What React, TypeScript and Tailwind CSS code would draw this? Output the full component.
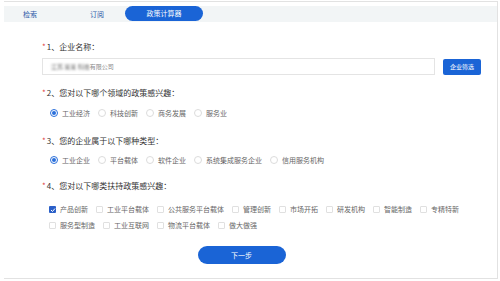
import React from "react";

const Radio = ({ label, checked }: { label: string; checked?: boolean }) => (
  <div className="flex items-center">
    {checked ? (
      <span className="w-[8px] h-[8px] rounded-full border border-[#2a6fdb] flex items-center justify-center">
        <span className="w-[4px] h-[4px] rounded-full bg-[#2a6fdb]" />
      </span>
    ) : (
      <span className="w-[8px] h-[8px] rounded-full border border-[#dcdcdc]" />
    )}
    <span className="ml-[4px] text-[7px] leading-none text-[#666]">{label}</span>
  </div>
);

const Check = ({ label, checked }: { label: string; checked?: boolean }) => (
  <div className="flex items-center">
    {checked ? (
      <span className="w-[7px] h-[7px] rounded-[1px] bg-[#2a5fc8] flex items-center justify-center">
        <svg width="6" height="6" viewBox="0 0 6 6">
          <path d="M1 3 L2.5 4.5 L5 1.5" stroke="white" strokeWidth="1" fill="none" />
        </svg>
      </span>
    ) : (
      <span className="w-[7px] h-[7px] rounded-[1px] border border-[#e0e0e0]" />
    )}
    <span className="ml-[4px] text-[7px] leading-none text-[#666]">{label}</span>
  </div>
);

const Label = ({ text }: { text: string }) => (
  <div className="flex items-center text-[8px] leading-none text-[#333]">
    <span className="text-[#e04040] mr-[1px]">*</span>
    {text}
  </div>
);

export default function App() {
  return (
    <div
      className="w-[500px] h-[281px] bg-white overflow-hidden"
      style={{ fontFamily: '"Noto Sans CJK SC", "Noto Sans", sans-serif' }}
    >
      <div className="ml-[4px] mt-[1px] w-[494px] h-[278px] border border-[#e2e2e2] border-l-0 bg-white">
        <div className="pt-[4px]">
          <div className="h-[16px] bg-[#f2f5f6] flex items-center relative">
            <span className="absolute left-[19px] text-[7px] leading-none text-[#2e5aa8]">检索</span>
            <span className="absolute left-[86px] text-[7px] leading-none text-[#2e5aa8]">订阅</span>
            <div className="absolute left-[121px] top-[0px] w-[78px] h-[15px] rounded-full bg-[#1a64d6] flex items-center justify-center text-[7px] leading-none text-white">
              政策计算器
            </div>
          </div>
        </div>

        <div className="pl-[38px] pr-[16px]">
          <div className="mt-[21px]">
            <Label text="1、企业名称：" />
          </div>
          <div className="mt-[7px] flex items-center">
            <div className="w-[393px] h-[17px] border border-[#e4e4e4] flex items-center pl-[8px] text-[6px] leading-none text-[#888]">
              <span className="blur-[0.8px] text-[#666]">江苏 某某 科技</span>
              <span>有限公司</span>
            </div>
            <div className="ml-[8px] w-[38px] h-[16px] rounded-[2px] bg-[#1a64d6] flex items-center justify-center text-[6px] leading-none text-white">
              企业筛选
            </div>
          </div>

          <div className="mt-[14px]">
            <Label text="2、您对以下哪个领域的政策感兴趣：" />
          </div>
          <div className="mt-[12px] ml-[8px] flex items-center gap-x-[8px]">
            <Radio label="工业经济" checked />
            <Radio label="科技创新" />
            <Radio label="商务发展" />
            <Radio label="服务业" />
          </div>

          <div className="mt-[20px]">
            <Label text="3、您的企业属于以下哪种类型：" />
          </div>
          <div className="mt-[11px] ml-[8px] flex items-center gap-x-[8px]">
            <Radio label="工业企业" checked />
            <Radio label="平台载体" />
            <Radio label="软件企业" />
            <Radio label="系统集成服务企业" />
            <Radio label="信用服务机构" />
          </div>

          <div className="mt-[18px]">
            <Label text="4、您对以下哪类扶持政策感兴趣：" />
          </div>
          <div className="mt-[16px] ml-[7px] flex flex-wrap items-center gap-x-[8px] gap-y-[9px] w-[420px]">
            <Check label="产品创新" checked />
            <Check label="工业平台载体" />
            <Check label="公共服务平台载体" />
            <Check label="管理创新" />
            <Check label="市场开拓" />
            <Check label="研发机构" />
            <Check label="智能制造" />
            <Check label="专精特新" />
            <Check label="服务型制造" />
            <Check label="工业互联网" />
            <Check label="物流平台载体" />
            <Check label="做大做强" />
          </div>
        </div>

        <div className="mt-[17px] flex justify-center pr-[18px]">
          <div className="w-[88px] h-[18px] rounded-full bg-[#1a64d6] flex items-center justify-center text-[7px] leading-none text-white">
            下一步
          </div>
        </div>
      </div>
    </div>
  );
}
